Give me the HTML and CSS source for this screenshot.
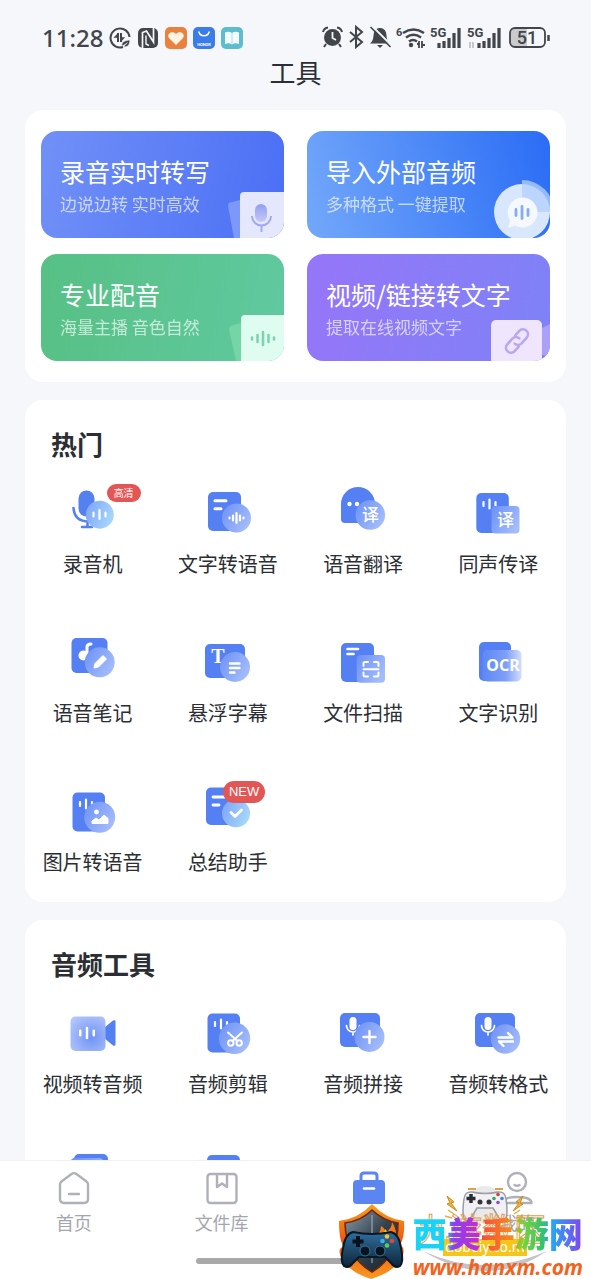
FILE: index.html
```html
<!DOCTYPE html>
<html lang="zh-CN">
<head>
    <meta charset="UTF-8">
    <meta name="viewport" content="width=device-width, initial-scale=1">
    <title>工具</title>
    <link rel="stylesheet" href="styles.css">
</head>
<body>
    <!-- Shared gradients and symbols -->
    <svg class="defs" width="0" height="0" aria-hidden="true">
        <defs>
            <linearGradient id="glass" x1="0" y1="0" x2="1" y2="0.6">
                <stop offset="0" stop-color="#6b90f5"/>
                <stop offset="1" stop-color="#a3bcfb"/>
            </linearGradient>
            <linearGradient id="sky" x1="0" y1="0" x2="1" y2="0.4">
                <stop offset="0" stop-color="#7ba2f6"/>
                <stop offset="1" stop-color="#a4d5fb"/>
            </linearGradient>
            <linearGradient id="ocr" x1="0" y1="0" x2="1" y2="0">
                <stop offset="0" stop-color="#5f88f5"/>
                <stop offset="0.6" stop-color="#7d9ff7"/>
                <stop offset="1" stop-color="#d3defd"/>
            </linearGradient>
            <radialGradient id="soft" cx="0.6" cy="0.6" r="0.8">
                <stop offset="0" stop-color="#6f92f5"/>
                <stop offset="1" stop-color="#b9cbfb"/>
            </radialGradient>
            <linearGradient id="micFade" x1="0" y1="0" x2="0" y2="1">
                <stop offset="0" stop-color="#939ff0"/>
                <stop offset="1" stop-color="#c3c9f8"/>
            </linearGradient>
            <linearGradient id="fire" x1="0" y1="0" x2="0" y2="1">
                <stop offset="0" stop-color="#f7a01c"/>
                <stop offset="0.5" stop-color="#f0560e"/>
                <stop offset="1" stop-color="#f79a22"/>
            </linearGradient>
            <linearGradient id="steel" x1="0" y1="0" x2="1" y2="1">
                <stop offset="0" stop-color="#8d9ba8"/>
                <stop offset="0.5" stop-color="#32424f"/>
                <stop offset="1" stop-color="#15202b"/>
            </linearGradient>
            <linearGradient id="pad" x1="0" y1="0" x2="0" y2="1">
                <stop offset="0" stop-color="#2e6f9e"/>
                <stop offset="1" stop-color="#0e2438"/>
            </linearGradient>
        </defs>
        <symbol id="bars" viewBox="0 0 16 12">
            <path d="M2 4v4M8 1.500v9M14 4v4" stroke="#fff" stroke-width="2.200" stroke-linecap="round"/>
        </symbol>
        <symbol id="mic" viewBox="0 0 18 22">
            <rect x="5.500" y="1" width="7" height="13" rx="3.500" fill="#fff"/>
            <path d="M2.500 9.500a6.500 6.500 0 0 0 13 0M9 16v3" fill="none" stroke="#fff" stroke-width="1.700" stroke-linecap="round"/>
        </symbol>
    </svg>

    <div class="app">
        <!-- Status bar -->
        <div class="status">
            <span class="time">11:28</span>
            <div class="status-apps">
                <svg width="22" height="22" viewBox="0 0 22 22" fill="none" stroke="#424549">
                    <path d="M20.500 10A9.500 9.500 0 1 0 14 20" stroke-width="2"/>
                    <path d="M9 6v9M12 6v9" stroke-width="2"/>
                    <path d="M9 6l-4.500 4.800H9zM12 15l4-4.800H12z" fill="#424549" stroke="none"/>
                    <path d="M13 19c-1-4 3-6 8-6 0 5-3 8-6.500 6.500l4-4" fill="#424549" stroke="#f5f7fb" stroke-width="0.800"/>
                </svg>
                <svg width="22" height="22" viewBox="0 0 22 22">
                    <rect x="1" y="1" width="20" height="20" rx="5" fill="#424549"/>
                    <path d="M5.500 21V5.500l4-1.500 7 11V1" fill="none" stroke="#f5f7fb" stroke-width="1.700"/>
                    <path d="M9 8.500V17l3 1.500" fill="none" stroke="#f5f7fb" stroke-width="1.400"/>
                </svg>
                <svg width="22" height="22" viewBox="0 0 22 22">
                    <rect width="22" height="22" rx="5" fill="#e9823f"/>
                    <path d="M11 18L4 11C1 6 8 3 11 7c3-4 10-1 7 4z" fill="#fff3e4"/>
                </svg>
                <svg width="22" height="22" viewBox="0 0 22 22">
                    <rect width="22" height="22" rx="5" fill="#3a7ce9"/>
                    <path d="M6 5c1 5 9 5 10 0" fill="none" stroke="#fff" stroke-width="1.500" stroke-linecap="round"/>
                    <text x="11" y="19" text-anchor="middle" class="mini">HONOR</text>
                </svg>
                <svg width="22" height="22" viewBox="0 0 22 22">
                    <rect width="22" height="22" rx="5" fill="#5dbccd"/>
                    <path d="M11 6Q8 4 4 5.500V17q4-1.500 7 .5 3-2 7-.5V5.500Q14 4 11 6z" fill="#f2fcfd"/>
                    <path d="M11 6v11" stroke="#a9dfe8"/>
                </svg>
            </div>
            <svg class="status-system" width="230" height="28" viewBox="0 -1 230 28" fill="none" stroke="#424549">
                <circle cx="11.500" cy="12.500" r="8.500" fill="#424549" stroke="none"/>
                <path d="M2 7q1-4 5-4.500M21 7q-1-4-5-4.500M5 19l-2 3M18 19l2 3" stroke-width="2"/>
                <path d="M11.500 7v6l3.500 2" stroke="#f5f7fb" stroke-width="1.800"/>
                <path d="M29 7l12 10-6 5V2l6 5-12 10" stroke-width="2"/>
                <path d="M49 18.500c4-3 3-7 4-11 1-3 3-4.500 6-4.500s5 1.500 6 4.500c1 4 0 8 4 11z" fill="#424549" stroke="none"/>
                <path d="M56 20h6l-3 3z" fill="#424549" stroke="none"/>
                <path d="M51 1l19 19" stroke="#f5f7fb" stroke-width="2"/>
                <path d="M49.500 2l20 20" stroke-width="1.600"/>
                <text x="75" y="11" class="sys-text sys-small">6</text>
                <path d="M82 8q10.500-7 21 0M85 12.500q7.500-5.500 15 0M88 16.500q4-3 8 0" stroke-width="2.500"/>
                <circle cx="90" cy="20" r="2.200" fill="#424549" stroke="none"/>
                <path d="M98 16v7M101 16v7M96 19h2M101 20h3" stroke-width="1.800"/>
                <text x="109" y="12" class="sys-text">5G</text>
                <path d="M118 23v-5M123 23v-7M128 23v-10M133 23V8M138 23V3" stroke-width="3.200"/>
                <text x="146" y="12" class="sys-text">5G</text>
                <path d="M149 17v6M152 17v6" stroke="#c4c7cb" stroke-width="2"/>
                <path d="M158 23v-5M163 23v-7M168 23v-10M173 23V8M178 23V3" stroke-width="3.200"/>
                <path d="M193 3h13v19h-13q-4 0-4-4V7q0-4 4-4z" fill="#c9cbcf" stroke="none"/>
                <rect x="189" y="3" width="35" height="19" rx="5" stroke-width="1.800"/>
                <path d="M227.500 10v6" stroke-width="2.500"/>
                <text x="206" y="19" text-anchor="middle" class="battery">51</text>
            </svg>
        </div>
        <h1 class="page-title">工具</h1>

        <main class="content">
            <!-- Main features -->
            <section class="card features">
                <button class="feature feature-record">
                    <span class="feature-name">录音实时转写</span>
                    <span class="feature-desc">边说边转 实时高效</span>
                    <svg class="feature-art" viewBox="0 0 60 60">
                        <path d="M4 28q0-4 4-4l12-3v39H10z" fill="#7c98f9"/>
                        <path d="M16 60V18q0-4 4-4h40v46z" fill="#e5e7fd"/>
                        <rect x="31" y="26" width="12" height="18" rx="6" fill="url(#micFade)"/>
                        <path d="M28 38a9.500 9.500 0 0 0 19 0M37.500 48v6" fill="none" stroke="#a0aaf2" stroke-width="2"/>
                    </svg>
                </button>
                <button class="feature feature-import">
                    <span class="feature-name">导入外部音频</span>
                    <span class="feature-desc">多种格式 一键提取</span>
                    <svg class="feature-art" viewBox="0 0 60 60">
                        <circle cx="32" cy="34" r="28" fill="#d9e7fd"/>
                        <path d="M32 2a32 32 0 0 1 32 32H32z" fill="#94bbfb"/>
                        <path d="M32 6a28 28 0 0 1 28 28H32z" fill="#bcd5fd"/>
                        <path d="M32 19.500a15 15 0 1 1-7 28l-7 2.500 2-7.500a15 15 0 0 1 12-23z" fill="#f5f9ff"/>
                        <path d="M26 31.500v6M32 28.500v12M38 31.500v6" stroke="#82adf3" stroke-width="2.800" stroke-linecap="round"/>
                    </svg>
                </button>
                <button class="feature feature-voice">
                    <span class="feature-name">专业配音</span>
                    <span class="feature-desc">海量主播 音色自然</span>
                    <svg class="feature-art" viewBox="0 0 60 60">
                        <path d="M5 28q0-3 4-4l12-3v39H12z" fill="#75d5a6"/>
                        <path d="M17 60V18q0-4 4-4h39v46z" fill="#dffcf0"/>
                        <path d="M28 36.500v2M33.500 34v7M39 31v13M44.500 34v7M50 36.500v2" stroke="#7fd3b0" stroke-width="2.600" stroke-linecap="round"/>
                    </svg>
                </button>
                <button class="feature feature-link">
                    <span class="feature-name">视频/链接转文字</span>
                    <span class="feature-desc">提取在线视频文字</span>
                    <svg class="feature-art" viewBox="0 0 60 60">
                        <path d="M50 28l10-5v33l-10-3z" fill="#aaa0f8"/>
                        <rect x="1" y="19" width="51" height="44" rx="5" fill="#efe6fd"/>
                        <g transform="rotate(-48 27 40)" fill="none" stroke="#bba7ee" stroke-width="2.600" stroke-linecap="round">
                            <path d="M24 45h-6a5 5 0 0 1 0-10h8a5 5 0 0 1 4.500 5"/>
                            <path d="M30 35h6a5 5 0 0 1 0 10h-8a5 5 0 0 1-4.500-5"/>
                        </g>
                    </svg>
                </button>
            </section>

            <!-- Popular tools -->
            <section class="card">
                <h2>热门</h2>
                <div class="tools">
                    <button class="tool">
                        <span class="tool-icon">
                            <svg viewBox="0 0 54 54">
                                <rect x="12.500" y="5.500" width="16" height="26" rx="8" fill="#5580ef"/>
                                <path d="M7.500 23q1 13 14 13.500v5M16 42h10" fill="none" stroke="#5580ef" stroke-width="2.600" stroke-linecap="round"/>
                                <circle cx="33.800" cy="29.700" r="14" fill="url(#sky)"/>
                                <use href="#bars" x="25.500" y="23.500" width="16" height="12"/>
                            </svg>
                            <span class="badge">高清</span>
                        </span>
                        <span>录音机</span>
                    </button>
                    <button class="tool">
                        <span class="tool-icon">
                            <svg viewBox="0 0 54 54">
                                <rect x="7" y="7" width="33" height="39" rx="5" fill="#5580f3"/>
                                <path d="M14 15.700h11M14 23.700h6" stroke="#fff" stroke-width="3" stroke-linecap="round"/>
                                <circle cx="35.500" cy="33" r="14.500" fill="url(#glass)"/>
                                <path d="M28.500 32.500v1M32 30.500v5M35.500 28v10M39 30.500v5M42.500 32.500v1" stroke="#fff" stroke-width="2.200" stroke-linecap="round"/>
                            </svg>
                        </span>
                        <span>文字转语音</span>
                    </button>
                    <button class="tool">
                        <span class="tool-icon">
                            <svg viewBox="0 0 54 54">
                                <path d="M5 19a17 17 0 0 1 34 0v19H9q-4 0-4-4z" fill="#5580f3"/>
                                <circle cx="13.500" cy="19" r="2.200" fill="#fff"/>
                                <circle cx="21" cy="19" r="2.200" fill="#fff"/>
                                <circle cx="34.300" cy="30" r="14.800" fill="url(#glass)"/>
                                <text x="34.500" y="36" text-anchor="middle" class="glyph">译</text>
                            </svg>
                        </span>
                        <span>语音翻译</span>
                    </button>
                    <button class="tool">
                        <span class="tool-icon">
                            <svg viewBox="0 0 54 54">
                                <rect x="5.300" y="8" width="32.500" height="40" rx="5" fill="#5580f3"/>
                                <use href="#bars" x="10.500" y="13" width="16" height="12"/>
                                <rect x="20.500" y="21" width="28" height="27.500" rx="4" fill="url(#glass)"/>
                                <text x="34.500" y="41" text-anchor="middle" class="glyph">译</text>
                            </svg>
                        </span>
                        <span>同声传译</span>
                    </button>
                    <button class="tool">
                        <span class="tool-icon">
                            <svg viewBox="0 0 54 54">
                                <rect x="5.500" y="4" width="36" height="35" rx="5" fill="#5580f3"/>
                                <circle cx="17.500" cy="21.500" r="5" fill="#fff"/>
                                <path d="M21 21V13q0-3 4-3" fill="none" stroke="#fff" stroke-width="3" stroke-linecap="round"/>
                                <circle cx="33.700" cy="28.300" r="15" fill="url(#glass)"/>
                                <path d="M28 34l1-4.500 8-8 3.500 3.500-8 8z" fill="#fff" stroke="#fff" stroke-width="1" stroke-linejoin="round"/>
                            </svg>
                        </span>
                        <span>语音笔记</span>
                    </button>
                    <button class="tool">
                        <span class="tool-icon">
                            <svg viewBox="0 0 54 54">
                                <rect x="4" y="10" width="40" height="34" rx="5" fill="#5580f3"/>
                                <text x="17" y="29" text-anchor="middle" class="letter">T</text>
                                <circle cx="34" cy="33" r="15" fill="url(#glass)"/>
                                <path d="M29 29.500h9.500M29 34h9.500M29 38.500h4.500" stroke="#fff" stroke-width="2.400" stroke-linecap="round"/>
                            </svg>
                        </span>
                        <span>悬浮字幕</span>
                    </button>
                    <button class="tool">
                        <span class="tool-icon">
                            <svg viewBox="0 0 54 54">
                                <rect x="5" y="9" width="33" height="39" rx="5" fill="#5580f3"/>
                                <path d="M11.500 15h10.500M11.500 20h6" stroke="#fff" stroke-width="2.600" stroke-linecap="round"/>
                                <rect x="20.700" y="21" width="28.300" height="27.700" rx="4" fill="url(#glass)"/>
                                <path d="M27.500 32v-2.500q0-1.500 1.500-1.500h3M38 28h3q1.500 0 1.500 1.500V32M42.500 38.500V41q0 1.500-1.500 1.500h-3M32 42.500h-3q-1.500 0-1.500-1.500v-2.500M27.500 35.300h15" fill="none" stroke="#fff" stroke-width="2" stroke-linecap="round"/>
                            </svg>
                        </span>
                        <span>文件扫描</span>
                    </button>
                    <button class="tool">
                        <span class="tool-icon">
                            <svg viewBox="0 0 54 54">
                                <rect x="8" y="8" width="32" height="39" rx="5" fill="#5580f3"/>
                                <rect x="11.500" y="16" width="39" height="31.500" rx="5" fill="url(#ocr)"/>
                                <text x="32" y="37" text-anchor="middle" class="ocr">OCR</text>
                            </svg>
                        </span>
                        <span>文字识别</span>
                    </button>
                    <button class="tool">
                        <span class="tool-icon">
                            <svg viewBox="0 0 54 54">
                                <rect x="6.500" y="9.500" width="32.500" height="39" rx="5" fill="#5580f3"/>
                                <use href="#bars" x="12" y="15" width="16" height="12"/>
                                <circle cx="33.700" cy="34.300" r="15.500" fill="url(#glass)"/>
                                <circle cx="30.500" cy="29" r="2.400" fill="#fff"/>
                                <path d="M26 40.500v-2.500l4-3 3 2 5-5 4 3.500v5z" fill="#fff" stroke="#fff" stroke-linejoin="round"/>
                            </svg>
                        </span>
                        <span>图片转语音</span>
                    </button>
                    <button class="tool">
                        <span class="tool-icon">
                            <svg viewBox="0 0 54 54">
                                <rect x="5" y="4.500" width="33" height="37.500" rx="5" fill="#5580f3"/>
                                <path d="M12 14h12M12 22h6" stroke="#fff" stroke-width="2.800" stroke-linecap="round"/>
                                <circle cx="35" cy="30.300" r="14" fill="url(#sky)"/>
                                <path d="M30 29.500l4 4 6.500-6.500" fill="none" stroke="#fff" stroke-width="2.800" stroke-linecap="round" stroke-linejoin="round"/>
                            </svg>
                            <span class="badge badge-new">NEW</span>
                        </span>
                        <span>总结助手</span>
                    </button>
                </div>
            </section>

            <!-- Audio tools -->
            <section class="card">
                <h2>音频工具</h2>
                <div class="tools">
                    <button class="tool">
                        <span class="tool-icon">
                            <svg viewBox="0 0 54 54">
                                <path d="M38 23l9-7.500q2.500-1 2.500 1v23q0 2-2.500 1L38 33z" fill="#5580f3"/>
                                <rect x="4.500" y="11.500" width="35" height="34.500" rx="5" fill="url(#soft)"/>
                                <use href="#bars" x="12" y="21" width="18" height="14"/>
                            </svg>
                        </span>
                        <span>视频转音频</span>
                    </button>
                    <button class="tool">
                        <span class="tool-icon">
                            <svg viewBox="0 0 54 54">
                                <rect x="6.500" y="8.500" width="32.500" height="39" rx="5" fill="#5580f3"/>
                                <use href="#bars" x="12" y="13" width="16" height="12"/>
                                <circle cx="33.500" cy="33.300" r="15.700" fill="url(#glass)"/>
                                <g fill="none" stroke="#fff" stroke-width="2">
                                    <circle cx="29.800" cy="38" r="2.700"/>
                                    <circle cx="38.200" cy="38" r="2.700"/>
                                    <path d="M31.500 36l9.500-8.500M36.500 36L27 27.500" stroke-linecap="round"/>
                                </g>
                            </svg>
                        </span>
                        <span>音频剪辑</span>
                    </button>
                    <button class="tool">
                        <span class="tool-icon">
                            <svg viewBox="0 0 54 54">
                                <rect x="4" y="8" width="40" height="34" rx="5" fill="#5580f3"/>
                                <use href="#mic" x="8" y="11" width="18" height="22"/>
                                <circle cx="33.500" cy="32" r="15" fill="url(#glass)"/>
                                <path d="M33.500 26v12M27.500 32h12" stroke="#fff" stroke-width="2.400" stroke-linecap="round"/>
                            </svg>
                        </span>
                        <span>音频拼接</span>
                    </button>
                    <button class="tool">
                        <span class="tool-icon">
                            <svg viewBox="0 0 54 54">
                                <rect x="4" y="8" width="40" height="34" rx="5" fill="#5580f3"/>
                                <use href="#mic" x="8" y="11" width="18" height="22"/>
                                <circle cx="34.500" cy="34" r="14.700" fill="url(#glass)"/>
                                <path d="M27.500 32.500h14l-4.500-4.500M42 36.500H28l4.500 4.500" fill="none" stroke="#fff" stroke-width="2.400" stroke-linecap="round" stroke-linejoin="round"/>
                            </svg>
                        </span>
                        <span>音频转格式</span>
                    </button>
                    <button class="tool">
                        <span class="tool-icon">
                            <svg viewBox="0 0 54 54">
                                <rect x="8" y="0" width="34" height="38" rx="5" fill="#5580f3"/>
                                <rect x="4" y="4" width="34" height="38" rx="5" fill="url(#glass)"/>
                            </svg>
                        </span>
                    </button>
                    <button class="tool">
                        <span class="tool-icon">
                            <svg viewBox="0 0 54 54">
                                <rect x="6" y="1" width="33" height="38" rx="5" fill="#5580f3"/>
                                <circle cx="34" cy="28" r="15" fill="url(#glass)"/>
                            </svg>
                        </span>
                    </button>
                </div>
            </section>
        </main>

        <!-- Bottom tabs -->
        <footer class="bottom">
            <nav class="tabs">
                <a href="#" class="tab">
                    <svg viewBox="0 0 34 34" fill="none" stroke="#aeb1b9" stroke-width="2.400">
                        <path d="M3 13.500q0-2 1.500-3L14.500 3q2.500-1.700 5 0l10 7.500q1.500 1 1.500 3V28q0 4-4 4H7q-4 0-4-4z"/>
                        <path d="M12 23h10" stroke-linecap="round"/>
                    </svg>
                    <span>首页</span>
                </a>
                <a href="#" class="tab">
                    <svg viewBox="0 0 34 34" fill="none" stroke="#aeb1b9" stroke-width="2.400">
                        <rect x="2.500" y="3" width="29" height="29" rx="3"/>
                        <path d="M12 3v13l5-3.500 5 3.500V3" stroke-linejoin="round"/>
                    </svg>
                    <span>文件库</span>
                </a>
                <a href="#" class="tab active">
                    <svg viewBox="0 0 34 34">
                        <path d="M9 11V5q0-3 3-3h10q3 0 3 3v6" fill="none" stroke="#5b85f0" stroke-width="3"/>
                        <rect x="1" y="9" width="32" height="24" rx="4" fill="#5b85f0"/>
                        <path d="M12 17.500h10" stroke="#fff" stroke-width="2.600" stroke-linecap="round"/>
                    </svg>
                    <span></span>
                </a>
                <a href="#" class="tab">
                    <svg viewBox="0 0 34 34" fill="none" stroke="#aeb1b9" stroke-width="2.400">
                        <circle cx="17" cy="11" r="9"/>
                        <path d="M14.500 14q2.500 1.500 5 0" stroke-linecap="round"/>
                        <path d="M2.500 32q0-6 14.500-6t14.500 6z" stroke-linejoin="round"/>
                    </svg>
                    <span>我的</span>
                </a>
            </nav>
            <div class="home-bar"></div>

            <!-- Site logos over the tab bar -->
            <div class="logo-back">
                <svg viewBox="0 0 140 96">
                    <circle cx="70" cy="22" r="19" fill="#e9e9ea"/>
                    <path d="M8 68q60 28 124 0-58 40-124 0z" fill="#c2c4c9"/>
                    <path d="M32 13l7 6-3 1 6 8-10-7 3-1zM108 13l-7 6 3 1-6 8 10-7-3-1z" fill="#f3b43c" stroke="#c98a1c"/>
                    <path d="M30 33l7 2M33 27l6 4M108 33l-7 2M105 27l-6 4" stroke="#e2ae4c" stroke-width="1.500"/>
                    <path d="M53 6h8M80 6h8" stroke="#d9a34a" stroke-width="2"/>
                    <path d="M57 9q13 3 26 0 7-1 8 7 2 12 0 20-3 4-7-1l-6-10H62l-6 10q-4 5-7 1-2-8 0-20 1-8 8-7z" fill="#f1f1f3" stroke="#9a9ca4" stroke-width="1.500"/>
                    <path d="M56 11v9M51.500 15.500h9" stroke="#2b2b35" stroke-width="3.500"/>
                    <circle cx="65" cy="19" r="2.500" fill="#33343c"/>
                    <circle cx="74" cy="19" r="2.500" fill="#33343c"/>
                    <circle cx="83" cy="11.500" r="1.800" fill="#d33c43"/>
                    <circle cx="87" cy="15.500" r="1.800" fill="#4382d8"/>
                    <circle cx="79" cy="15.500" r="1.800" fill="#36a56b"/>
                    <circle cx="83" cy="19.500" r="1.800" fill="#8a4fc0"/>
                    <text x="3" y="58" class="old-name">九游数区</text>
                    <rect x="28" y="56" width="84" height="17" fill="#f4c61c"/>
                    <text x="70" y="69" text-anchor="middle" class="old-url">dobeiy.co.m</text>
                </svg>
            </div>
            <div class="logo">
                <svg class="shield" viewBox="0 0 68 76">
                    <path d="M1 18Q1 38 6 44q-6 0-4 8 6 16 31 24 26-8 32-24 2-8-3-10 5-8 4-24Q48 16 34 1 20 16 1 18z" fill="url(#fire)"/>
                    <path d="M7 20q16-2 27-13 12 11 26 13 0 34-26 49Q8 54 7 20z" fill="url(#steel)" stroke="#702507" stroke-width="1.500"/>
                    <path d="M34 12v48" stroke="#a8b7c0" stroke-width="1"/>
                    <path d="M34 34q9-2 9-11 5 3 4 7 7-4 7-11 6 9 3 17l-1 8H36z" fill="#f8791b"/>
                    <path d="M42 34q5-3 5-8 4 4 3 8z" fill="#fdd24c"/>
                    <path d="M15 29q19 4 38 0 8 2 10 16 3 14-1 18-5 3-9-3l-6-6H21l-6 6q-4 6-9 3-4-4-1-18 2-14 10-16z" fill="url(#pad)" stroke="#091825" stroke-width="2"/>
                    <path d="M20 33v11M14.500 38.500h11" stroke="#07121c" stroke-width="4"/>
                    <circle cx="27" cy="48" r="5" fill="#081520" stroke="#3b7193"/>
                    <circle cx="42" cy="48" r="5" fill="#081520" stroke="#3b7193"/>
                    <circle cx="49" cy="33.500" r="2.300" fill="#f9c32d"/>
                    <circle cx="54" cy="38" r="2.300" fill="#e8443a"/>
                    <circle cx="44.500" cy="38" r="2.300" fill="#36b4f0"/>
                    <circle cx="49" cy="42.500" r="2.300" fill="#63ca4e"/>
                </svg>
                <div class="logo-text">
                    <strong class="logo-name">西美手游网</strong>
                    <em class="logo-url">www.hanxm.com</em>
                </div>
            </div>
        </footer>
    </div>
</body>
</html>
```
FILE: styles.css
```css
* {
    box-sizing: border-box;
}

body {
    margin: 0;
    font-family: "Noto Sans CJK SC", sans-serif;
    color: #2b2e33;
    background: #f5f7fb;
}

button {
    border: none;
    padding: 0;
    font: inherit;
    color: inherit;
    background: none;
    cursor: pointer;
}

.defs {
    position: absolute;
}

.app {
    display: flex;
    flex-direction: column;
    height: 100vh;
}

/* Status bar */
.status {
    display: flex;
    align-items: center;
    padding: 24px 40px 0 42px;
    height: 52px;
}

.time {
    font-family: "Noto Sans", sans-serif;
    font-size: 24px;
    font-weight: 500;
    line-height: 28px;
    color: #424549;
}

.status-apps {
    display: flex;
    gap: 6px;
    margin-left: 6px;
}

.status-system {
    margin-left: auto;
}

.sys-text,
.battery {
    font-family: "Roboto", sans-serif;
    font-size: 13px;
    font-weight: 700;
    fill: #424549;
    stroke: none;
}

.sys-small {
    font-size: 11px;
}

.battery {
    font-size: 18px;
    font-weight: 500;
}

.mini {
    font-family: "Roboto", sans-serif;
    font-size: 4px;
    font-weight: 700;
    fill: #fff;
}

.page-title {
    margin: 0;
    padding: 2px 0 20px;
    font-size: 26px;
    font-weight: 400;
    line-height: 36px;
    text-align: center;
}

/* Cards */
.content {
    flex: 1;
    min-height: 0;
    overflow-y: auto;
    scrollbar-width: none;
    display: flex;
    flex-direction: column;
    gap: 18px;
    padding: 0 25px;
}

.card {
    flex-shrink: 0;
    padding: 26px 0;
    border-radius: 18px;
    background: #fff;
}

.card h2 {
    margin: 0 0 23px;
    padding-left: 26px;
    font-size: 26px;
    font-weight: 700;
    line-height: 36px;
}

.features {
    display: grid;
    grid-template-columns: 1fr 1fr;
    gap: 16px 23px;
    padding: 21px 16px;
}

.feature {
    position: relative;
    display: flex;
    flex-direction: column;
    padding: 22px 19px 20px;
    border-radius: 16px;
    overflow: hidden;
    text-align: left;
    white-space: nowrap;
    color: #fff;
}

.feature-record {
    background: linear-gradient(100deg, #7190f7, #4b6ff5);
}

.feature-import {
    background: linear-gradient(75deg, #73a8fa, #2a6cf5);
}

.feature-voice {
    background: linear-gradient(100deg, #57c084, #60c9a0);
}

.feature-link {
    background: linear-gradient(100deg, #9576f8, #7f82f7);
}

.feature-name {
    font-size: 25px;
    line-height: 37px;
}

.feature-desc {
    font-size: 17px;
    line-height: 28px;
    opacity: 0.65;
}

.feature-art {
    position: absolute;
    right: 0;
    bottom: 0;
    width: 60px;
    height: 60px;
}

/* Tool grid */
.tools {
    display: grid;
    grid-template-columns: repeat(4, 1fr);
    row-gap: 56px;
}

.tool {
    display: flex;
    flex-direction: column;
    align-items: center;
    gap: 11px;
    font-size: 20px;
    line-height: 28px;
    white-space: nowrap;
}

.tool-icon {
    position: relative;
    width: 54px;
    height: 54px;
}

.tool-icon svg {
    display: block;
}

.badge {
    position: absolute;
    left: 41px;
    top: -1px;
    padding: 0 7px;
    border-radius: 10px;
    font-size: 10px;
    line-height: 18px;
    color: #fff;
    background: #e35656;
}

.badge-new {
    left: 22px;
    top: -2px;
    padding: 0 6px;
    border-radius: 11px;
    font-family: "Liberation Sans", sans-serif;
    font-size: 13px;
    line-height: 22px;
}

.glyph {
    font-size: 17px;
    font-weight: 500;
    fill: #fff;
}

.letter {
    font-family: "Liberation Serif", serif;
    font-size: 20px;
    font-weight: 700;
    fill: #fff;
}

.ocr {
    font-family: "Noto Sans", sans-serif;
    font-size: 16px;
    font-weight: 700;
    fill: #fff;
}

/* Bottom tabs */
.bottom {
    position: relative;
    flex-shrink: 0;
    padding: 10px 0 15px;
    border-top: 1px solid #f0f1f4;
    background: #fff;
}

.tabs {
    display: grid;
    grid-template-columns: repeat(4, 1fr);
}

.tab {
    display: flex;
    flex-direction: column;
    align-items: center;
    gap: 5px;
    font-size: 18px;
    line-height: 24px;
    text-decoration: none;
    color: #a3a6ae;
}

.tab svg {
    width: 34px;
    height: 34px;
}

.home-bar {
    width: 200px;
    height: 6px;
    margin: 24px auto 0;
    border-radius: 3px;
    background: #a9a9a9;
}

/* Site logos */
.logo-back {
    position: absolute;
    right: 36px;
    bottom: 0;
    width: 140px;
    height: 96px;
}

.old-name {
    font-size: 32px;
    fill: none;
    stroke: #dfa04e;
    stroke-width: 1px;
}

.old-url {
    font-family: "Noto Sans", sans-serif;
    font-size: 14px;
    fill: #fff;
}

.logo {
    position: absolute;
    right: 8px;
    bottom: 0;
    display: flex;
    align-items: flex-end;
    gap: 7px;
}

.shield {
    width: 68px;
    height: 76px;
}

.logo-text {
    display: flex;
    flex-direction: column;
}

.logo-name {
    font-size: 34px;
    font-weight: 900;
    line-height: 44px;
    color: transparent;
    background: linear-gradient(90deg, #18d3f5 0 18%, #8a3ff0 24%, #c02fd0 38%, #f5533a 42%, #f78a1c 58%, #7bd43a 64%, #35c46a 76%, #28a5f5 82%, #7a4cf2 98%);
    -webkit-background-clip: text;
    background-clip: text;
}

.logo-url {
    font-family: "Noto Sans", sans-serif;
    font-size: 21px;
    font-weight: 700;
    line-height: 24px;
    color: #f2641e;
}
```
